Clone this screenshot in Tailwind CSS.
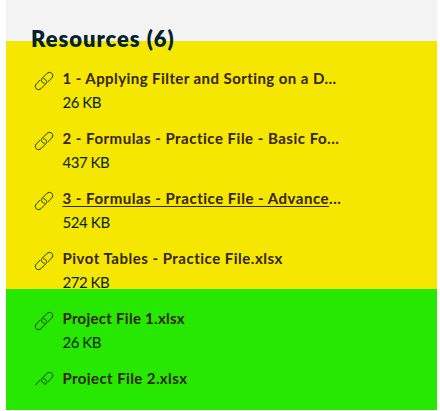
<!DOCTYPE html>
<html lang="en">
  <head>
    <meta charset="UTF-8" />
    <meta name="viewport" content="width=device-width, initial-scale=1.0" />
    <title>Resources</title>

    <script src="https://cdn.jsdelivr.net/npm/@tailwindcss/browser@4"></script>
  </head>
  <body class="bg-white h-[411px] overflow-hidden">
    <!-- Link icon shared by all rows -->
    <svg class="hidden">
      <symbol id="link" viewBox="0 0 20 20">
        <g fill="none" stroke="currentColor" stroke-width="0.9" stroke-linecap="round">
          <path d="M10.3 12.2C7.4 11.8 6.5 9 8.3 7.1L12.8 2.6C14.3 1.1 16.4 1 17.8 2.3C19.1 3.7 19 5.8 17.5 7.3L14 10.8" />
          <path d="M9.7 7.8C12.6 8.2 13.5 11 11.7 12.9L7.2 17.4C5.7 18.9 3.6 19 2.2 17.7C0.9 16.3 1 14.2 2.5 12.7L6 9.2" />
        </g>
      </symbol>
    </svg>

    <div
      class="ml-1.5 w-[431px] h-[410px] pt-[25px] pl-[25px] bg-[linear-gradient(#f3f3f3_41px,#f5e700_41px,#f5e700_289px,#27e800_289px)] font-[Lato,sans-serif] text-[#06240c]"
    >
      <h2 class="h-7 text-[22px] leading-7 font-extrabold text-[#03222b] tracking-[0.95px] whitespace-nowrap">
        Resources (6)
      </h2>

      <ul class="mt-[13px] h-[319px] overflow-hidden">
        <li class="flex h-[60px]">
          <svg class="mt-[5px] ml-[3px] mr-[8.5px] size-5 shrink-0"><use href="#link" /></svg>
          <div class="leading-6 whitespace-nowrap">
            <p class="text-[15px] font-bold text-[#352508] tracking-[0.43px]">1 - Applying Filter and Sorting on a D...</p>
            <p class="text-[15px] tracking-[-0.5px]">26 KB</p>
          </div>
        </li>
        <li class="flex h-[60px]">
          <svg class="mt-[5px] ml-[3px] mr-[8.5px] size-5 shrink-0"><use href="#link" /></svg>
          <div class="leading-6 whitespace-nowrap">
            <p class="text-[15px] font-bold text-[#352508] tracking-[0.5px]">2 - Formulas - Practice File - Basic Fo...</p>
            <p class="text-[15px] tracking-[-0.5px]">437 KB</p>
          </div>
        </li>
        <li class="flex h-[60px]">
          <svg class="mt-[5px] ml-[3px] mr-[8.5px] size-5 shrink-0"><use href="#link" /></svg>
          <div class="leading-6 whitespace-nowrap">
            <p class="text-[15px] font-bold text-[#352508] tracking-[0.51px]"><span class="underline decoration-1 underline-offset-2">3 - Formulas - Practice File - Advance</span>...</p>
            <p class="text-[15px] tracking-[-0.4px]">524 KB</p>
          </div>
        </li>
        <li class="flex h-[60px]">
          <svg class="mt-[5px] ml-[3px] mr-[8.5px] size-5 shrink-0"><use href="#link" /></svg>
          <div class="leading-6 whitespace-nowrap">
            <p class="text-[15px] font-bold text-[#352508] tracking-[0.5px]">Pivot Tables - Practice File.xlsx</p>
            <p class="text-[15px] tracking-[-0.5px]">272 KB</p>
          </div>
        </li>
        <li class="flex h-[60px]">
          <svg class="mt-[5px] ml-[3px] mr-[8.5px] size-5 shrink-0"><use href="#link" /></svg>
          <div class="leading-6 whitespace-nowrap">
            <p class="text-[15px] font-bold text-[#352508] tracking-[0.27px]">Project File 1.xlsx</p>
            <p class="text-[15px] tracking-[-0.5px]">26 KB</p>
          </div>
        </li>
        <li class="flex h-[60px]">
          <svg class="mt-[5px] ml-[3px] mr-[8.5px] size-5 shrink-0"><use href="#link" /></svg>
          <div class="leading-6 whitespace-nowrap">
            <p class="text-[15px] font-bold text-[#352508] tracking-[0.4px]">Project File 2.xlsx</p>
          </div>
        </li>
      </ul>
    </div>
  </body>
</html>
